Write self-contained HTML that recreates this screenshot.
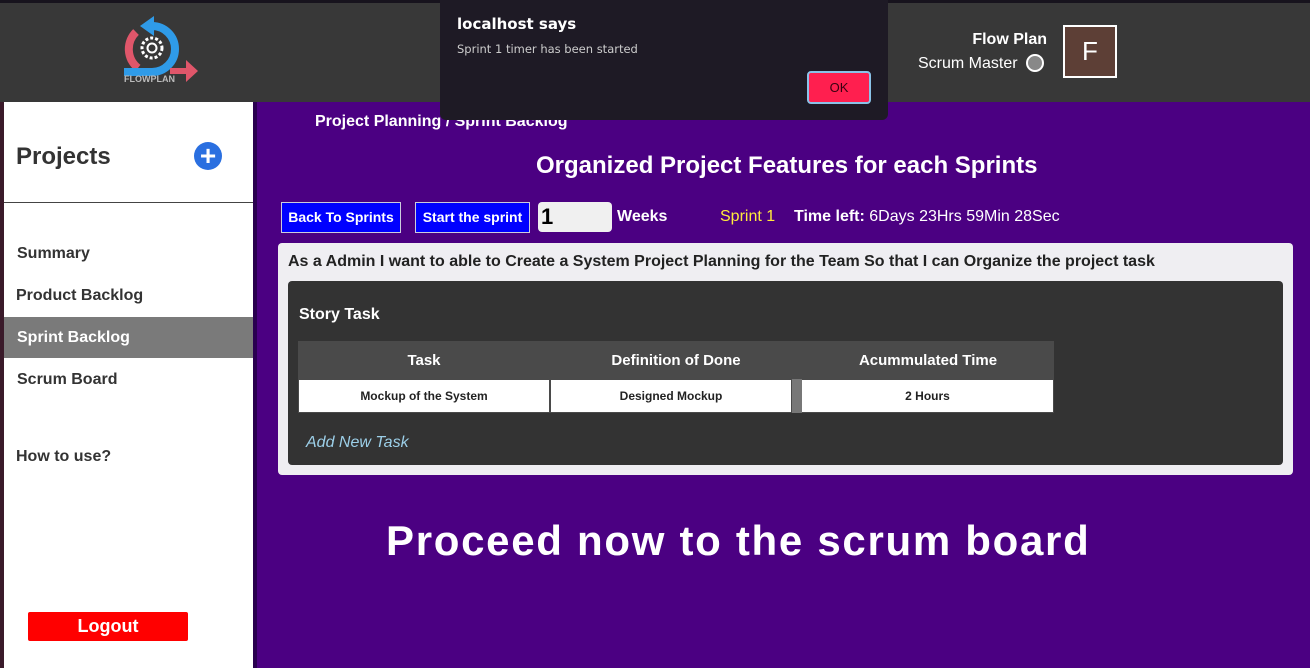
<!DOCTYPE html>
<html><head><meta charset="utf-8"><style>
*{margin:0;padding:0;box-sizing:border-box}
body{width:1310px;height:668px;position:relative;overflow:hidden;background:#4b0082;font-family:"Liberation Sans",Arial,sans-serif}
.a{position:absolute}
.b{font-weight:bold}
</style></head><body>
<div class="a" style="left:0;top:0;width:1310px;height:3px;background:#17131d"></div>
<div class="a" style="left:0;top:3px;width:1310px;height:99px;background:#383838"></div>
<div class="a" style="left:0;top:102px;width:4px;height:566px;background:#3a1a2a"></div>
<div class="a" style="left:4px;top:102px;width:249px;height:566px;background:#fff"></div>
<div class="a" style="left:253px;top:102px;width:4px;height:566px;background:#2a0050"></div>
<!-- logo -->
<svg class="a" style="left:120px;top:16px" width="80" height="68" viewBox="0 0 80 68">
<path d="M16 16 A24 24 0 0 0 18 52" stroke="#e0566a" stroke-width="8" fill="none"/>
<path d="M32 10 A23 23 0 1 1 32 56 L4 56" stroke="#2f9be8" stroke-width="8" fill="none"/>
<path d="M20 10 L34 0 L34 20 Z" fill="#2f9be8"/>
<path d="M50 52 L66 52 L66 44 L78 55 L66 66 L66 58 L50 58Z" fill="#e0566a"/>
<circle cx="32" cy="32" r="10" stroke="#fff" stroke-width="3" fill="none" stroke-dasharray="3 2"/>
<circle cx="32" cy="32" r="4.5" stroke="#fff" stroke-width="2" fill="none"/>
<text x="4" y="66" font-size="9" font-weight="bold" fill="#bbb" font-family="Liberation Sans">FLOWPLAN</text>
</svg>
<div class="a b" style="right:263px;top:31px;color:#fff;font-size:16px">Flow Plan</div>
<div class="a" style="left:918px;top:55px;color:#fff;font-size:16px">Scrum Master</div>
<div class="a" style="left:1026px;top:54px;width:18px;height:18px;border-radius:50%;background:#888;border:2px solid #fff"></div>
<div class="a" style="left:1063px;top:25px;width:54px;height:53px;background:#5d3f36;border:2px solid #fff;color:#fff;font-size:26px;text-align:center;line-height:49px">F</div>
<!-- sidebar -->
<div class="a b" style="left:16px;top:143px;font-size:24px;color:#333">Projects</div>
<div class="a" style="left:194px;top:142px;width:28px;height:28px;border-radius:50%;background:#2a6fe0;color:#fff;font-size:28px;line-height:28px;text-align:center;font-weight:bold">+</div>
<div class="a" style="left:4px;top:202px;width:249px;height:1px;background:#444"></div>
<div class="a b" style="left:17px;top:245px;font-size:16px;color:#333">Summary</div>
<div class="a b" style="left:16px;top:287px;font-size:16px;color:#333">Product Backlog</div>
<div class="a" style="left:4px;top:317px;width:249px;height:41px;background:#7a7a7a"></div>
<div class="a b" style="left:17px;top:329px;font-size:16px;color:#fff">Sprint Backlog</div>
<div class="a b" style="left:17px;top:371px;font-size:16px;color:#333">Scrum Board</div>
<div class="a b" style="left:16px;top:448px;font-size:16px;color:#333">How to use?</div>
<div class="a b" style="left:28px;top:612px;width:160px;height:29px;background:#ff0000;color:#fff;font-size:18px;text-align:center;line-height:29px;border-radius:2px">Logout</div>
<!-- main -->
<div class="a b" style="left:315px;top:113px;color:#fff;font-size:16px">Project Planning / Sprint Backlog</div>
<div class="a b" style="left:536px;top:152px;color:#fff;font-size:24px">Organized Project Features for each Sprints</div>
<div class="a b" style="left:281px;top:202px;width:120px;height:31px;background:#0000ff;border:1px solid #ccd;color:#fff;font-size:14px;text-align:center;line-height:29px">Back To Sprints</div>
<div class="a b" style="left:415px;top:202px;width:115px;height:31px;background:#0000ff;border:1px solid #ccd;color:#fff;font-size:14px;text-align:center;line-height:29px">Start the sprint</div>
<div class="a b" style="left:538px;top:202px;width:74px;height:30px;background:#f0f0f0;border-radius:4px;color:#000;font-size:22px;padding-left:3px;line-height:30px">1</div>
<div class="a b" style="left:617px;top:208px;color:#fff;font-size:16px">Weeks</div>
<div class="a" style="left:720px;top:208px;color:#ffeb3b;font-size:16px">Sprint 1</div>
<div class="a" style="left:794px;top:208px;color:#fff;font-size:16px"><b>Time left:</b> 6Days 23Hrs 59Min 28Sec</div>
<div class="a" style="left:278px;top:243px;width:1015px;height:232px;background:#efeef2;border-radius:4px"></div>
<div class="a b" style="left:288px;top:253px;color:#222;font-size:16px">As a Admin I want to able to Create a System Project Planning for the Team So that I can Organize the project task</div>
<div class="a" style="left:288px;top:281px;width:995px;height:184px;background:#333;border-radius:4px"></div>
<div class="a b" style="left:299px;top:306px;color:#fff;font-size:16px">Story Task</div>
<div class="a" style="left:298px;top:341px;width:756px;height:72px;background:#4a4a4a"></div>
<div class="a b" style="left:298px;top:352px;width:252px;text-align:center;color:#fff;font-size:15px">Task</div>
<div class="a b" style="left:550px;top:352px;width:252px;text-align:center;color:#fff;font-size:15px">Definition of Done</div>
<div class="a b" style="left:802px;top:352px;width:252px;text-align:center;color:#fff;font-size:15px">Acummulated Time</div>
<div class="a" style="left:792px;top:379px;width:10px;height:34px;background:#777"></div>
<div class="a b" style="left:299px;top:380px;width:250px;height:32px;background:#fff;text-align:center;line-height:32px;font-size:12px;color:#222">Mockup of the System</div>
<div class="a b" style="left:551px;top:380px;width:240px;height:32px;background:#fff;text-align:center;line-height:32px;font-size:12px;color:#222">Designed Mockup</div>
<div class="a b" style="left:802px;top:380px;width:251px;height:32px;background:#fff;text-align:center;line-height:32px;font-size:12px;color:#222">2 Hours</div>
<div class="a" style="left:306px;top:434px;color:#9ccfe8;font-size:16px;font-style:italic">Add New Task</div>
<div class="a b" style="left:386px;top:517px;color:#fff;font-size:42px;letter-spacing:1.7px">Proceed now to the scrum board</div>
<!-- dialog -->
<div class="a" style="left:440px;top:0;width:448px;height:120px;background:#1e1a25;border-radius:0 0 6px 6px"></div>
<div class="a b" style="left:457px;top:15px;color:#fff;font-size:15px;font-family:'DejaVu Sans',sans-serif;font-weight:600">localhost says</div>
<div class="a" style="left:457px;top:42px;color:#ccc;font-size:11.5px;font-family:'DejaVu Sans',sans-serif">Sprint 1 timer has been started</div>
<div class="a" style="left:807px;top:71px;width:64px;height:33px;background:#ff1f4f;border:2px solid #8ac2e8;border-radius:4px;color:#3a0010;font-size:13px;text-align:center;line-height:29px">OK</div>
</body></html>
